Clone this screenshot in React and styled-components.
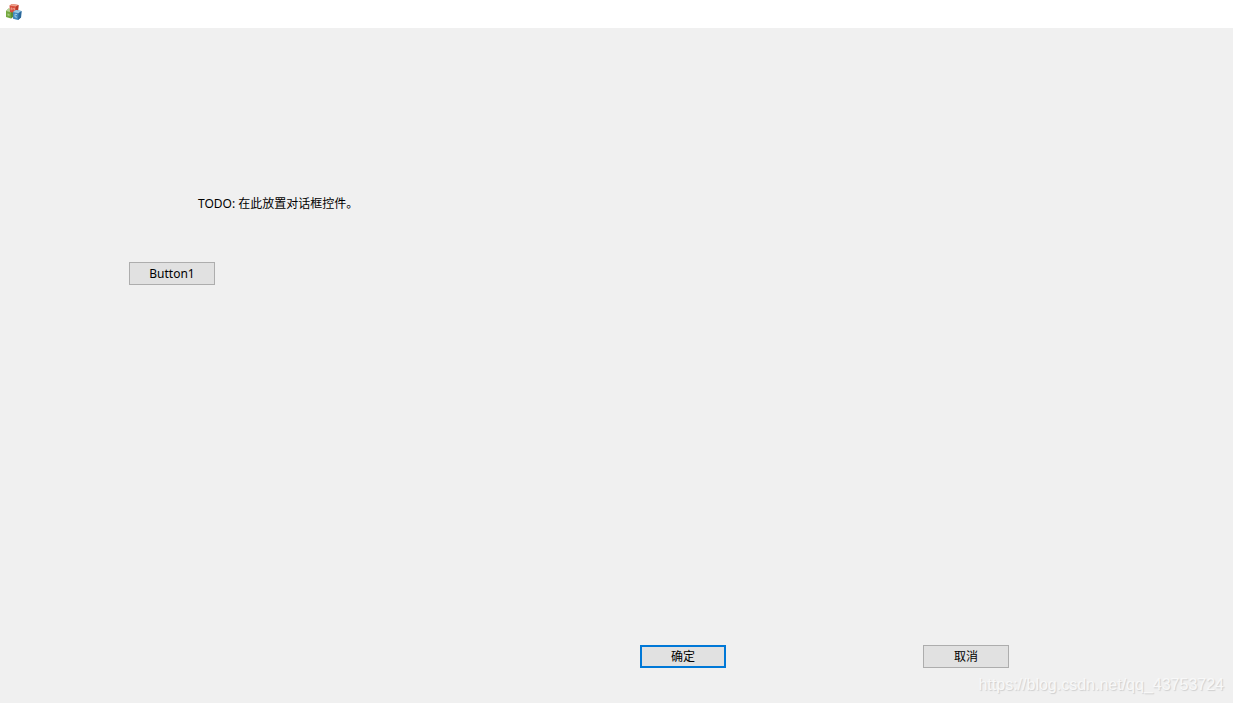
import React from "react";
import styled, { createGlobalStyle } from "styled-components";

const GlobalStyle = createGlobalStyle`
  * { box-sizing: border-box; }
  body { margin: 0; background: #f0f0f0; }
`;

const Dialog = styled.div`
  position: relative;
  display: flex;
  flex-direction: column;
  min-height: 100vh;
  background: #f0f0f0;
  color: #000;
  font-family: "Noto Sans", "Noto Sans CJK SC", sans-serif;
  font-size: 12px;
  line-height: 16px;
`;

const TitleBar = styled.header`
  display: flex;
  align-items: flex-start;
  height: 28px;
  padding: 4px 6px;
  background: #fff;
`;

const Content = styled.main`
  display: flex;
  flex: 1;
  flex-direction: column;
  align-items: flex-start;
  gap: 50px;
  padding: 168px 129px 40px;
`;

const Label = styled.p`
  margin: 0 0 0 69px;
`;

const Actions = styled.footer`
  display: flex;
  justify-content: flex-end;
  gap: 197px;
  padding: 0 224px 35px 0;
`;

const Button = styled.button`
  width: 86px;
  height: 23px;
  padding: 0;
  border: ${(p) => (p.$primary ? "2px solid #0078d7" : "1px solid #adadad")};
  background: #e1e1e1;
  color: #000;
  font: inherit;
  text-align: center;
`;

const Watermark = styled.span`
  position: absolute;
  right: 9px;
  bottom: 8px;
  color: #f8f8f8;
  font-family: "Liberation Sans", sans-serif;
  font-size: 16px;
  line-height: 20px;
  text-shadow: 1px 1px 1px #cecece;
  pointer-events: none;
`;

function CubesIcon() {
  return (
    <svg width="16" height="16" viewBox="0 0 16 16" aria-hidden="true">
      <path d="M0 7 2.5 4.5 8 6V12L5 14.5 0 13Z" fill="#74a83f" />
      <path d="M0 7 2.5 4.5 8 6 5 8.2Z" fill="#b5d496" />
      <path d="M5 8.2 8 6V12L5 14.5Z" fill="#588a36" />
      <path d="M1.5 9.5 3.5 10V12L1.5 11.5Z" fill="#a9cc85" />
      <path d="M3.5 1.5 6 0 12.5 1 12 7.5 9.5 9 4 8Z" fill="#d94f3b" />
      <path d="M3.5 1.5 6 0 12.5 1 10 2.5Z" fill="#eda08b" />
      <path d="M10 2.5 12.5 1 12 7.5 9.5 9Z" fill="#b83b2b" />
      <path d="M5.2 6.2V3.8L6.8 5.2 8.4 4.2V6.5" fill="none" stroke="#f0b5a7" strokeWidth="0.8" />
      <path d="M7 8 10 6 15.5 7 15 13.5 12 16 7 14.8Z" fill="#4089be" />
      <path d="M7 8 10 6 15.5 7 12.5 9.2Z" fill="#9acbe5" />
      <path d="M12.5 9.2 15.5 7 15 13.5 12 16Z" fill="#2c6799" />
      <path d="M11 10.6 9 10.2V12.8L11 13.2" fill="none" stroke="#a9d2e9" strokeWidth="0.9" />
    </svg>
  );
}

export default function App() {
  return (
    <>
      <GlobalStyle />
      <Dialog>
        <TitleBar>
          <CubesIcon />
        </TitleBar>
        <Content>
          <Label>TODO: 在此放置对话框控件。</Label>
          <Button type="button">Button1</Button>
        </Content>
        <Actions>
          <Button type="button" $primary>确定</Button>
          <Button type="button">取消</Button>
        </Actions>
        <Watermark>https://blog.csdn.net/qq_43753724</Watermark>
      </Dialog>
    </>
  );
}
